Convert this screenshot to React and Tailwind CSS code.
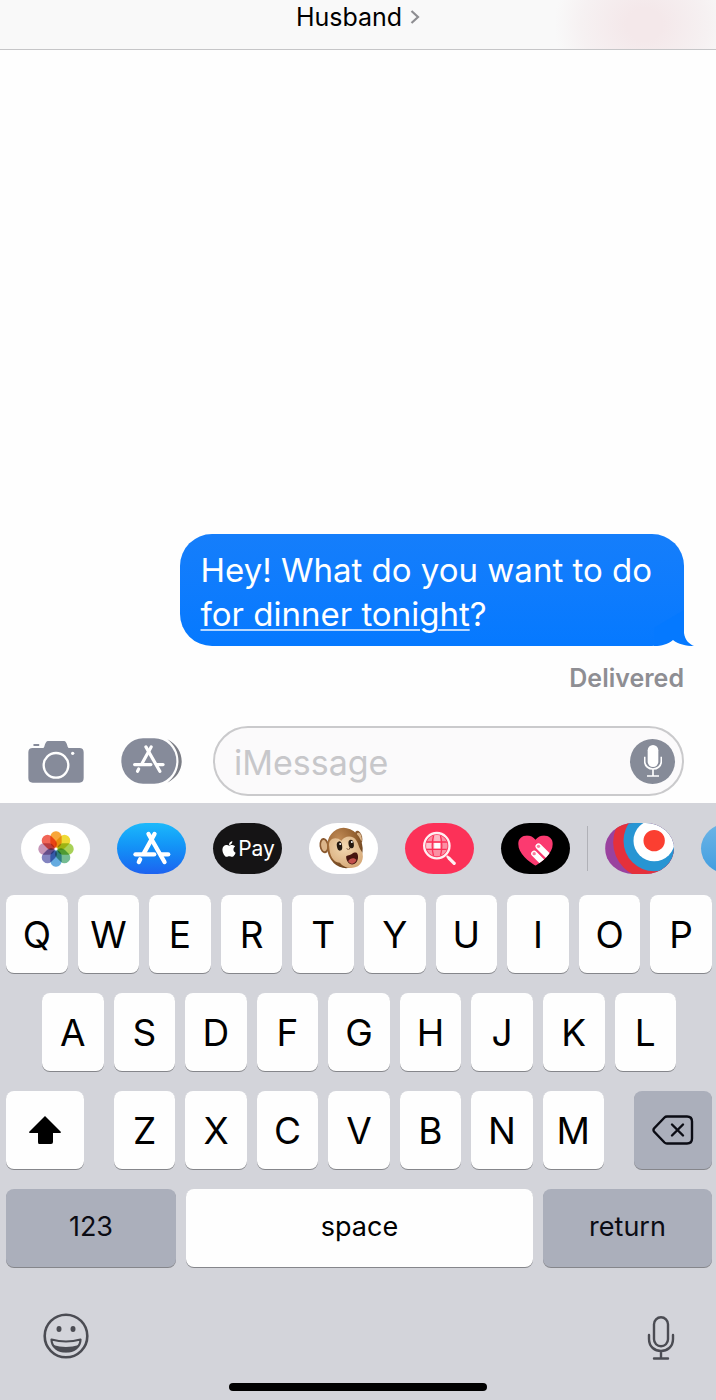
import React from "react";
import { FaApple } from "react-icons/fa";

const PETALS = [
  ["#f79a1e", 0],
  ["#ecd51a", 45],
  ["#9ccb3f", 90],
  ["#62b383", 135],
  ["#4f9fdc", 180],
  ["#7273b8", 225],
  ["#bd86ad", 270],
  ["#f0513f", 315],
];

function Key({ children, label, tone = "light", size = "letter", className = "" }) {
  const toneClass =
    tone === "light" ? "bg-[#fefefe] text-black" : "bg-[#abafbb] text-[#0b0c14]";
  const sizeClass = size === "letter" ? "text-[37px]" : "pb-1 text-[27px]";
  return (
    <button
      type="button"
      aria-label={label}
      className={`flex h-[78px] min-w-0 items-center justify-center rounded-lg leading-none shadow-[0_1px_0_#85868b] ${toneClass} ${sizeClass} ${className}`}
    >
      {children}
    </button>
  );
}

function Letters({ letters }) {
  return letters.split("").map((letter) => (
    <Key key={letter} className="flex-1">
      {letter}
    </Key>
  ));
}

function AppPill({ label, className = "", children }) {
  return (
    <button
      type="button"
      aria-label={label}
      className={`flex h-[51px] w-[69px] shrink-0 items-center justify-center overflow-hidden rounded-[29px/26px] ${className}`}
    >
      {children}
    </button>
  );
}

function AppStoreMark({ width }) {
  return (
    <g fill="none" stroke="#fff" strokeWidth={width} strokeLinecap="round">
      <path d="M112 33 L80 91" />
      <path d="M94 33 L142 117" />
      <path d="M55 94 H111" />
      <path d="M132 94 H153" />
      <path d="M69 109 L65 117" />
    </g>
  );
}

function PhotosIcon() {
  return (
    <svg viewBox="-60 -60 120 120" className="isolate size-10" aria-hidden="true">
      {PETALS.map(([color, angle]) => (
        <rect
          key={angle}
          x="-17"
          y="-53"
          width="34"
          height="49"
          rx="16"
          fill={color}
          opacity="0.88"
          transform={`rotate(${angle})`}
          className="mix-blend-multiply"
        />
      ))}
      <circle r="4" fill="#fff" />
    </svg>
  );
}

function MonkeyIcon() {
  return (
    <svg viewBox="0 0 206 153" className="h-full w-full" aria-hidden="true">
      <defs>
        <radialGradient id="fur" cx="0.4" cy="0.25" r="0.8">
          <stop offset="0" stopColor="#c08a55" />
          <stop offset="0.6" stopColor="#94602f" />
          <stop offset="1" stopColor="#5e3a1b" />
        </radialGradient>
        <radialGradient id="skin" cx="0.45" cy="0.35" r="0.75">
          <stop offset="0" stopColor="#f3d9b2" />
          <stop offset="1" stopColor="#d3a472" />
        </radialGradient>
      </defs>
      <ellipse cx="45" cy="68" rx="14" ry="23" fill="#8a5a30" transform="rotate(-8 45 68)" />
      <ellipse cx="45" cy="68" rx="9" ry="17" fill="#dcb68b" transform="rotate(-8 45 68)" />
      <ellipse cx="148" cy="43" rx="11" ry="20" fill="#8a5a30" transform="rotate(-14 148 43)" />
      <ellipse cx="150" cy="43" rx="7" ry="14" fill="#dcb68b" transform="rotate(-14 150 43)" />
      <ellipse cx="107" cy="75" rx="53" ry="61" fill="url(#fur)" transform="rotate(-14 107 75)" />
      <path
        d="M60 70 C56 46 80 38 97 53 C104 38 132 34 142 53 C148 62 149 72 154 80 C167 93 163 126 138 133 C118 138 102 132 92 119 C70 119 61 94 60 70 Z"
        fill="url(#skin)"
      />
      <ellipse cx="91" cy="69" rx="8" ry="14" fill="#24180f" transform="rotate(-8 91 69)" />
      <ellipse cx="126" cy="63" rx="8" ry="13" fill="#24180f" transform="rotate(-8 126 63)" />
      <circle cx="93" cy="63" r="3" fill="#fff" />
      <circle cx="128" cy="57" r="3" fill="#fff" />
      <path d="M114 77 l3 3 M122 75 l-1 3" stroke="#5b3821" strokeWidth="3" strokeLinecap="round" />
      <path
        d="M111 103 C110 96 120 98 128 93 C135 88 142 87 145 93 C149 103 146 118 135 123 C123 128 112 118 111 103 Z"
        fill="#45140f"
      />
      <path d="M117 115 C122 105 136 103 142 111 C136 125 123 126 117 115 Z" fill="#c24f4b" />
    </svg>
  );
}

function ImageSearchIcon() {
  return (
    <svg viewBox="0 0 206 153" className="h-full w-full" aria-hidden="true">
      <defs>
        <clipPath id="globe">
          <circle cx="95" cy="68" r="32" />
        </clipPath>
      </defs>
      <g clipPath="url(#globe)">
        <rect x="60" y="33" width="70" height="70" fill="#fb8fa3" />
        <rect x="87" y="59" width="18" height="18" fill="#fff" />
        <rect x="87" y="33" width="18" height="22" fill="#fdb9c5" />
        <rect x="60" y="59" width="22" height="18" fill="#fdc6d0" />
        <g fill="none" stroke="#fc3158" strokeWidth="4">
          <path d="M60 57 H130 M60 79 H130" />
          <path d="M86 34 C80 55 80 82 86 103 M105 34 C111 55 111 82 105 103" />
        </g>
      </g>
      <circle cx="95" cy="68" r="38" fill="none" stroke="#fff0f2" strokeWidth="7" />
      <path d="M125 99 L132 106" stroke="#fff0f2" strokeWidth="7" />
      <path d="M132 106 L147 121" stroke="#fff0f2" strokeWidth="10" strokeLinecap="round" />
    </svg>
  );
}

function HeartTouchIcon() {
  return (
    <svg viewBox="0 0 206 153" className="h-full w-full" aria-hidden="true">
      <defs>
        <clipPath id="heart">
          <path d="M103 128 C84 117 51 91 51 63 C51 34 88 29 103 50 C118 29 155 34 155 63 C155 91 122 117 103 128 Z" />
        </clipPath>
      </defs>
      <g clipPath="url(#heart)">
        <rect x="45" y="30" width="120" height="105" fill="#fb3a70" />
        <g strokeLinecap="round" fill="none">
          <path d="M112 70 L150 108" stroke="#fff" strokeWidth="18" />
          <path d="M99 92 L137 130" stroke="#fff" strokeWidth="18" />
          <path d="M106 82 L144 120" stroke="#fb3a70" strokeWidth="4" />
        </g>
        <circle cx="112" cy="70" r="5" fill="#fb7a9e" />
        <circle cx="99" cy="92" r="5" fill="#fb7a9e" />
      </g>
    </svg>
  );
}

function TargetIcon() {
  return (
    <svg viewBox="0 0 206 153" className="h-full w-full" aria-hidden="true">
      <rect width="206" height="153" fill="#9a429f" />
      <circle cx="132" cy="58" r="108" fill="#e5303b" />
      <circle cx="147" cy="53" r="92" fill="#2795d3" />
      <circle cx="147" cy="53" r="62" fill="#fff" />
      <circle cx="147" cy="53" r="32" fill="#fb3f31" />
    </svg>
  );
}

function Header() {
  return (
    <header className="flex h-[50px] justify-center border-b border-[#c6c6c8] bg-[#f9f9f9] bg-[radial-gradient(ellipse_90px_80px_at_90%_50%,#f4e8ea_20%,#f6f1f2_70%,#f9f9f9_100%)]">
      <button type="button" className="flex h-[34px] items-center gap-2 text-[25px] leading-none text-black">
        Husband
        <svg viewBox="0 0 10 16" className="h-4 w-2.5" aria-hidden="true">
          <path d="M1.5 2 L8 8 L1.5 14" fill="none" stroke="#8e8e92" strokeWidth="2.2" />
        </svg>
      </button>
    </header>
  );
}

function Conversation() {
  return (
    <main className="flex flex-1 flex-col items-end justify-end px-8 pb-8">
      <p className="relative rounded-[32px] bg-linear-to-b from-[#157efb] to-[#0579ff] pt-3.5 pr-8 pb-2.5 pl-[21px] text-[33px] leading-[44px] text-white">
        Hey! What do you want to do
        <br />
        <a
          href="#event"
          className="underline decoration-white/70 decoration-2 underline-offset-[3px]"
        >
          for dinner tonight
        </a>
        ?
        <svg
          viewBox="0 0 40 36"
          className="absolute -right-2.5 bottom-0 h-9 w-10"
          aria-hidden="true"
        >
          <path
            d="M30 0 V23 C31 30 35 34 40 36 C32 36 24 34 19 30 C14 34 8 36 0 36 V18 Z"
            fill="#0579ff"
          />
        </svg>
      </p>
      <p className="pt-4 text-[25px] leading-8 font-semibold text-[#8e8e93]">Delivered</p>
    </main>
  );
}

function Composer() {
  return (
    <form className="flex items-center pr-8 pb-[7px] pl-7" onSubmit={(e) => e.preventDefault()}>
      <button type="button" aria-label="Camera" className="shrink-0">
        <svg viewBox="0 0 168 129" className="h-[43px] w-14" aria-hidden="true">
          <path
            d="M14 24 H46 C51 22 50 4 60 3 H108 C118 4 117 22 122 24 H154 Q167 24 167 37 V114 Q167 128 154 128 H14 Q1 128 1 114 V37 Q1 24 14 24 Z"
            fill="#868b9a"
          />
          <rect x="16" y="12" width="18" height="6" rx="2" fill="#868b9a" />
          <circle cx="84" cy="76" r="37" fill="none" stroke="#fff" strokeWidth="7" />
          <circle cx="134" cy="40" r="5" fill="#fff" />
        </svg>
      </button>
      <button type="button" aria-label="Apps" className="ml-[37px] shrink-0">
        <svg viewBox="0 0 183 138" className="h-[46px] w-[61px]" aria-hidden="true">
          <path
            d="M66 1 H100 A66 68 0 0 1 100 137 H66 A65 68 0 0 1 66 1 Z"
            fill="#868b9a"
          />
          <path
            d="M139 4 C195 32 198 105 139 134 C184 100 183 38 139 4 Z"
            fill="#7b7d85"
          />
          <g transform="translate(-7 -2) scale(0.87)">
            <AppStoreMark width={11} />
          </g>
        </svg>
      </button>
      <div className="ml-[31px] flex h-[70px] min-w-0 flex-1 items-center rounded-full border-2 border-[#cacacc] bg-[#fbfafb] pr-[7px] pl-[19px]">
        <input
          type="text"
          aria-label="Message"
          placeholder="iMessage"
          className="min-w-0 flex-1 bg-transparent pt-1 text-[34px] leading-[44px] text-black outline-none placeholder:text-[#c7c7ca]"
        />
        <button
          type="button"
          aria-label="Record audio"
          className="flex size-[45px] shrink-0 items-center justify-center rounded-full bg-[#868b98]"
        >
          <svg viewBox="0 0 54 96" className="h-8 w-[18px]" aria-hidden="true">
            <rect x="11" y="0" width="32" height="66" rx="16" fill="#fff" />
            <path
              d="M2 35 V48 C2 80 52 80 52 48 V35 M27 72 V93 M9 93 H45"
              fill="none"
              stroke="#fff"
              strokeWidth="5"
            />
          </svg>
        </button>
      </div>
    </form>
  );
}

function AppStrip() {
  return (
    <div className="flex overflow-hidden pt-5 pl-[21px]">
      <div className="flex shrink-0 gap-[27px]">
        <AppPill label="Photos" className="bg-white">
          <PhotosIcon />
        </AppPill>
        <AppPill label="App Store" className="bg-linear-to-b from-[#1db9fb] to-[#1d62f0]">
          <svg viewBox="0 0 206 153" className="h-full w-full" aria-hidden="true">
            <AppStoreMark width={13} />
          </svg>
        </AppPill>
        <AppPill label="Apple Pay" className="bg-[#151415] text-[21px] leading-none text-white">
          <FaApple className="size-[18px]" aria-hidden="true" />
          Pay
        </AppPill>
        <AppPill label="Animoji" className="bg-white">
          <MonkeyIcon />
        </AppPill>
        <AppPill label="Image search" className="bg-[#fc3158]">
          <ImageSearchIcon />
        </AppPill>
        <AppPill label="Digital Touch" className="bg-black">
          <HeartTouchIcon />
        </AppPill>
      </div>
      <div className="mx-[17px] my-[3px] w-px shrink-0 bg-[#b0b1b7]" />
      <div className="flex shrink-0 gap-[27px]">
        <AppPill label="Target">
          <TargetIcon />
        </AppPill>
        <AppPill label="More apps" className="bg-linear-to-b from-[#6cb5e6] to-[#3f9de0]" />
      </div>
    </div>
  );
}

function Keyboard() {
  return (
    <section aria-label="Keyboard" className="bg-[#d3d4da]">
      <AppStrip />
      <div className="flex flex-col gap-5 pt-[21px] pr-1 pl-1.5">
        <div className="flex gap-2.5">
          <Letters letters="QWERTYUIOP" />
        </div>
        <div className="flex gap-2.5 px-9">
          <Letters letters="ASDFGHJKL" />
        </div>
        <div className="flex justify-between">
          <Key label="Shift" className="w-[78px] shrink-0">
            <svg viewBox="0 0 32 28" className="h-7 w-8" aria-hidden="true">
              <path
                d="M16 0 L32 16 Q32 17 31 17 H24 V26 Q24 28 22 28 H10 Q9 28 9 26 V17 H1 Q0 17 0 16 Z"
                fill="#000"
              />
            </svg>
          </Key>
          <div className="mx-[30px] flex flex-1 gap-2.5">
            <Letters letters="ZXCVBNM" />
          </div>
          <Key label="Delete" tone="dark" className="w-[78px] shrink-0">
            <svg viewBox="0 0 42 30" className="h-[30px] w-[42px]" aria-hidden="true">
              <path
                d="M15 1.5 H35 Q40 1.5 40 6.5 V23.5 Q40 28.5 35 28.5 H15 Q13.5 28.5 12.5 27.5 L2 16.5 Q1 15 2 13.5 L12.5 2.5 Q13.5 1.5 15 1.5 Z"
                fill="none"
                stroke="#0b0c14"
                strokeWidth="2.4"
              />
              <path
                d="M20 9.5 L31 20.5 M31 9.5 L20 20.5"
                stroke="#0b0c14"
                strokeWidth="2.4"
                strokeLinecap="round"
              />
            </svg>
          </Key>
        </div>
        <div className="flex gap-2.5">
          <Key tone="dark" size="word" className="w-[170px]">
            123
          </Key>
          <Key size="word" className="flex-1">
            space
          </Key>
          <Key tone="dark" size="word" className="w-[169px]">
            return
          </Key>
        </div>
      </div>
      <div className="flex items-end justify-between pt-[45px] pr-[41px] pl-[43px]">
        <button type="button" aria-label="Emoji">
          <svg viewBox="0 0 46 48" className="h-12 w-[46px]" aria-hidden="true">
            <circle cx="23" cy="24" r="21.3" fill="none" stroke="#4b4c53" strokeWidth="2.6" />
            <ellipse cx="16" cy="17" rx="2.5" ry="3" fill="#4b4c53" />
            <ellipse cx="30" cy="17" rx="2.5" ry="3" fill="#4b4c53" />
            <path
              d="M8.5 27.5 Q23 31.5 37.5 27.5 C37.5 43.5 8.5 43.5 8.5 27.5 Z"
              fill="none"
              stroke="#4b4c53"
              strokeWidth="2.2"
              strokeLinejoin="round"
            />
            <path d="M10 33 Q23 37 36 33 C32 42.5 14 42.5 10 33 Z" fill="#4b4c53" />
          </svg>
        </button>
        <button type="button" aria-label="Dictate">
          <svg viewBox="0 0 28 44" className="h-11 w-7" aria-hidden="true">
            <g fill="none" stroke="#4b4c53" strokeWidth="2.4" strokeLinecap="round">
              <rect x="7" y="1.3" width="14" height="29" rx="7" />
              <path d="M2 19 V23 C2 39 26 39 26 23 V19 M14 35.5 V42.5 M7 42.5 H21" />
            </g>
          </svg>
        </button>
      </div>
      <div className="mx-auto mt-[23px] mb-[9px] h-2 w-[36%] rounded-full bg-black" />
    </section>
  );
}

export default function App() {
  return (
    <div className="flex min-h-screen flex-col bg-[#fefefe] font-['Inter','Liberation_Sans',sans-serif]">
      <Header />
      <Conversation />
      <Composer />
      <Keyboard />
    </div>
  );
}
